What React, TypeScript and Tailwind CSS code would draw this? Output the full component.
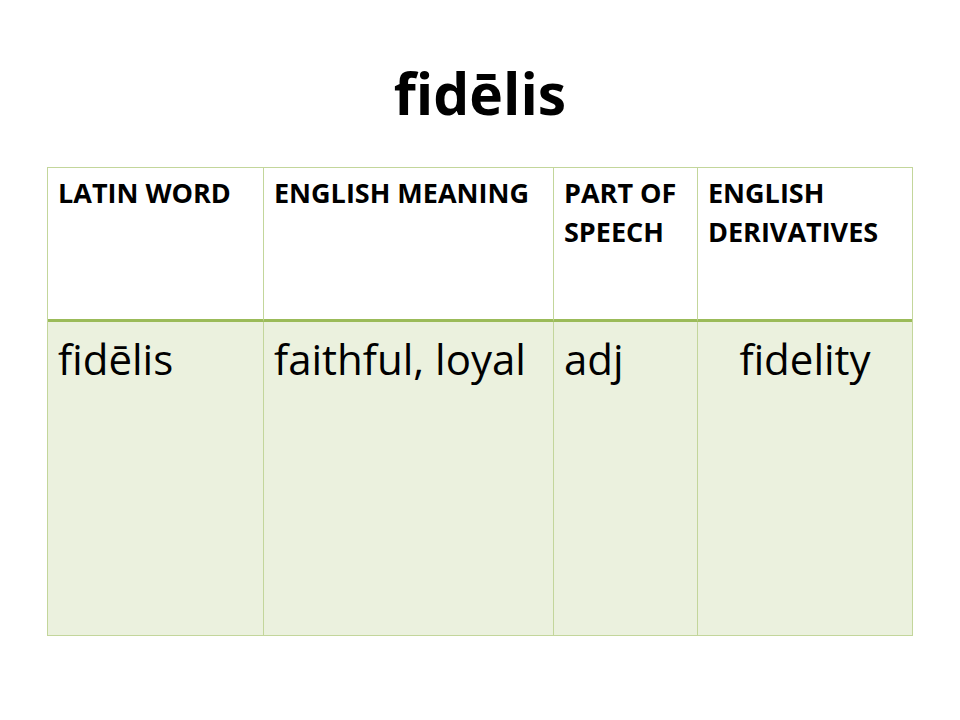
const headers = ["LATIN WORD", "ENGLISH MEANING", "PART OF SPEECH", "ENGLISH DERIVATIVES"];

const row = [
  { text: "fidēlis", align: "text-left" },
  { text: "faithful, loyal", align: "text-left" },
  { text: "adj", align: "text-left" },
  { text: "fidelity", align: "text-center" },
];

export default function App() {
  return (
    <div
      className="h-[720px] w-[960px] bg-white text-black"
      style={{ fontFamily: '"Open Sans", "Liberation Sans", sans-serif' }}
    >
      <h1 className="h-[167px] pt-[52px] text-center text-[57px] font-bold leading-[82px]">
        fidēlis
      </h1>

      <div className="ml-[47px] grid w-[866px] grid-cols-[216px_290px_144px_214px] border border-[#c3d69b]">
        {headers.map((h, i) => (
          <div
            key={h}
            className={`h-[154px] border-b-[3px] border-b-[#9bbb59] px-[10px] pt-[5px] text-[27px] font-bold leading-[39px] ${
              i < 3 ? "border-r border-r-[#c3d69b]" : ""
            }`}
          >
            {h}
          </div>
        ))}
        {row.map((c, i) => (
          <div
            key={c.text}
            className={`h-[313px] whitespace-nowrap bg-[#ebf1de] px-[10px] pt-[8px] text-[42px] leading-[57px] ${c.align} ${
              i < 3 ? "border-r border-r-[#c3d69b]" : ""
            }`}
          >
            {c.text}
          </div>
        ))}
      </div>
    </div>
  );
}
